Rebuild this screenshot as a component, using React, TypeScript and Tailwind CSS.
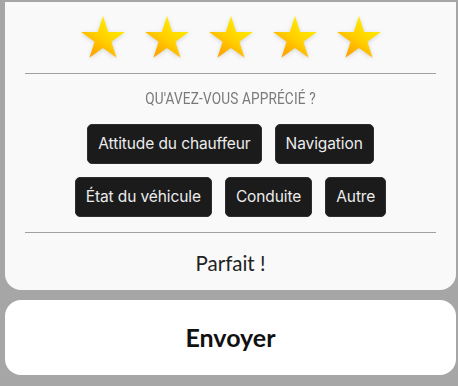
import React from 'react';

const REASONS_ROW_1 = ['Attitude du chauffeur', 'Navigation'];
const REASONS_ROW_2 = ['État du véhicule', 'Conduite', 'Autre'];

function Star({ id }: { id: number }) {
  return (
    <svg width="44" height="42" viewBox="0 0 44 42" className="drop-shadow-[0_1px_2px_rgba(0,0,0,0.15)]">
      <defs>
        <linearGradient id={`g${id}`} x1="0.85" y1="0.1" x2="0.2" y2="1">
          <stop offset="0" stopColor="#fff200" />
          <stop offset="0.5" stopColor="#ffd000" />
          <stop offset="1" stopColor="#ff9a00" />
        </linearGradient>
      </defs>
      <polygon
        fill={`url(#g${id})`}
        points="22,0 27.19,15.96 43.97,15.96 30.4,25.83 35.58,41.79 22,31.93 8.42,41.79 13.6,25.83 0.03,15.96 16.81,15.96"
      />
    </svg>
  );
}

function Chip({ label }: { label: string }) {
  return (
    <button className="h-10 px-[10px] rounded-[5px] bg-[#1b1b1b] border border-[#2e2e2e] text-[#ececec] text-[15.5px] tracking-[-0.1px] font-['Inter',sans-serif]">
      {label}
    </button>
  );
}

export default function App() {
  return (
    <div className="h-[386px] w-[458px] bg-[#a6a6a6] pt-[2px] pl-[5px] pr-[2px] flex flex-col">
      <div className="h-[288px] bg-[#f9f9f9] rounded-b-[16px] flex flex-col items-center">
        {/* Stars */}
        <div className="flex gap-5 mt-[14px]">
          {[1, 2, 3, 4, 5].map((s) => (
            <Star key={s} id={s} />
          ))}
        </div>

        <div className="w-[411px] h-px bg-[#a0a0a0] mt-[15px]" />

        <div className="mt-[16px] h-[18px] flex items-center justify-center">
          <span className="inline-block scale-x-[0.8] text-[17px] text-[#7a7a7a] font-['Roboto',sans-serif] tracking-[0.2px] whitespace-nowrap">
            QU'AVEZ-VOUS APPRÉCIÉ ?
          </span>
        </div>

        <div className="flex flex-col items-center gap-[13px] mt-[16px]">
          <div className="flex gap-[13px]">
            {REASONS_ROW_1.map((r) => (
              <Chip key={r} label={r} />
            ))}
          </div>
          <div className="flex gap-[13px]">
            {REASONS_ROW_2.map((r) => (
              <Chip key={r} label={r} />
            ))}
          </div>
        </div>

        <div className="w-[411px] h-px bg-[#a0a0a0] mt-[15px]" />

        <div className="mt-[15px] text-[20.5px] text-[#222] font-['Lato',sans-serif]">Parfait !</div>
      </div>

      <div className="mt-[10px] h-[75px] bg-white rounded-[16px] flex items-center justify-center">
        <span className="text-[25px] font-bold text-[#111] font-['Lato',sans-serif]">Envoyer</span>
      </div>
    </div>
  );
}
